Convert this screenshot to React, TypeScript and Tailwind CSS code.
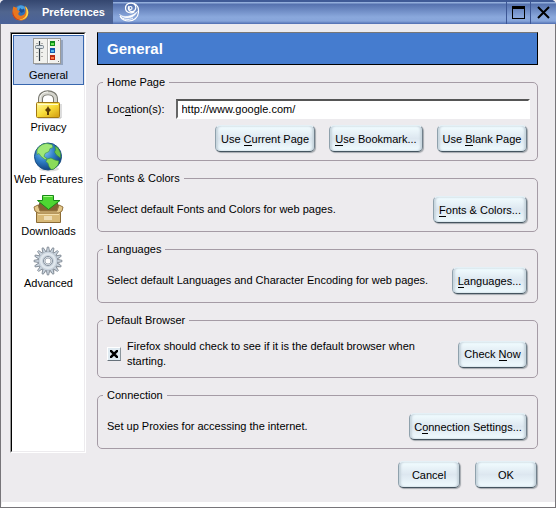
import React from "react";

function FirefoxIcon() {
  return (
    <svg width="17" height="17" viewBox="0 0 17 17" aria-hidden="true">
      <circle cx="8.5" cy="8" r="7" fill="#2f6fb8" />
      <path d="M5 3c3-2.500 7-2 8.500 1l-2 3-3-1-3 1z" fill="#4aa0e0" />
      <path d="M8 4l2 1.500 2-1v3L9.500 9 7 7z" fill="#1d4f94" />
      <path d="M1.500 2.500C3 3.500 4.500 3.500 5.500 3.500L5 6l3 1-1.500 2c-1 2 1.500 3.500 3.500 2.500 2-.5 3.500-2 3.500-5 0-2-.5-3.500-1.500-4.500 3 1.500 4.500 4 4.300 7C16 14 12.500 16.500 8.500 16.500 4 16.500.5 13 .5 8.500c0-2.500.2-4.500 1-6z" fill="#e8761e" />
      <path d="M13 2c4 3 4.500 9 .5 12-2 1.500-4 2-6 1.500 4 0 7-3 7-7 0-2.500-.5-4.500-1.500-6.500z" fill="#f9dc50" />
      <path d="M1 7c0 5 3 8 7 9-4 .5-7.500-3-7.500-7z" fill="#c23a1c" />
    </svg>
  );
}

function SwirlIcon() {
  return (
    <svg width="22" height="20" viewBox="0 0 22 20" fill="none" stroke="#fff" aria-hidden="true">
      <circle cx="11.500" cy="6" r="1.500" strokeWidth="1.200" />
      <path d="M15.500 9.500C12 12.500 6.500 10.500 6.500 6S12 0 15 2s2 7-1.500 7.500S8.500 6.500 10 4" strokeWidth="1.200" />
      <path d="M15 1.500c3.500 1.500 5 5 4.500 9C19 16 14.500 19 10 19c-4 0-7.500-2-9-5" strokeWidth="1.200" />
      <path d="M.5 12.500c4 3.500 12 2.500 18-3-3.500 6.500-12 9-18 3z" fill="#fff" strokeWidth=".6" />
      <path d="M1 14.500c3 3 9 4 13 1.500" strokeWidth="1" />
    </svg>
  );
}

function GeneralIcon() {
  return (
    <svg width="32" height="30" viewBox="0 0 32 30" aria-hidden="true">
      <rect x="2" y="2" width="28" height="25" fill="#6f7f9a" opacity=".55" />
      <rect x=".5" y=".5" width="27" height="25" fill="#f1f1ed" stroke="#9a9a98" />
      <path d="M14.500 1v24" stroke="#b5b5b2" />
      <path d="M15.500 1v24" stroke="#fff" />
      <path d="M6.500 3v20" stroke="#26333f" strokeWidth="1.200" />
      <path d="M3 5.500h2M3 14.500h2M3 18.500h2M8 5.500h2M8 14.500h2M8 18.500h2" stroke="#b0b0ad" />
      <rect x="2.500" y="7.500" width="8" height="3" rx="1" fill="#dce3e8" stroke="#738089" />
      <rect x="17" y="3" width="5" height="5" fill="#0c8a1b" />
      <rect x="17" y="10" width="5" height="5" fill="#1258ac" />
      <rect x="17" y="17" width="5" height="5" fill="#b82a10" />
      <path d="M18 5h3v2h-3z" fill="#66e554" />
      <path d="M18 12h3v2h-3z" fill="#55b9f2" />
      <path d="M18 19h3v2h-3z" fill="#ff7a44" />
      <path d="M25 2h1v1h-1zM25 23h1v1h-1z" fill="#777" />
    </svg>
  );
}

function LockIcon() {
  return (
    <svg width="32" height="30" viewBox="0 0 32 30" aria-hidden="true">
      <defs>
        <linearGradient id="gold" x1="0" y1="0" x2="1" y2="1">
          <stop stopColor="#fff7a0" /><stop offset=".5" stopColor="#f8dc38" /><stop offset="1" stopColor="#d09a10" />
        </linearGradient>
      </defs>
      <path d="M7.500 14V9C7.500.500 22.500.500 22.500 9v5" fill="none" stroke="#77776f" strokeWidth="5" />
      <path d="M7.500 14V9C7.500 1 22.500 1 22.500 9v5" fill="none" stroke="#d4d4cc" strokeWidth="3" />
      <path d="M7 13V9C7 4 11 2 15 2" fill="none" stroke="#f8f8f4" />
      <path d="M5 28h23V14" fill="none" stroke="#bbb" />
      <rect x="3.500" y="12.500" width="23" height="15" rx="1" fill="url(#gold)" stroke="#a27812" />
      <path d="M5 14.500h20" stroke="#fffcc5" />
      <path d="M15 16l1 2 2 2-2 2v3h-2v-3l-2-2 2-2z" fill="#5b3c06" />
    </svg>
  );
}

function GlobeIcon() {
  return (
    <svg width="32" height="30" viewBox="0 0 32 30" aria-hidden="true">
      <defs>
        <radialGradient id="sea" cx=".35" cy=".3" r=".75">
          <stop stopColor="#8fccf4" /><stop offset=".5" stopColor="#2f7fc8" /><stop offset="1" stopColor="#103c78" />
        </radialGradient>
      </defs>
      <ellipse cx="16" cy="27" rx="10" ry="2.500" fill="#bbb" opacity=".5" />
      <circle cx="15" cy="14.500" r="13.500" fill="url(#sea)" stroke="#164c84" />
      <path d="M4 8c2-4 6-6.500 10-6.500l5 1 1 3-3 1-1 3-4 2-1 3 3 2-2 1-4-3-2-3-2 1z" fill="#a0e878" stroke="#3c963c" strokeWidth=".6" />
      <path d="M14 17l4-1 4 2 4 1-1 4-4 4-3 .5-2-3-1-3-2-2z" fill="#8adb5a" stroke="#31883a" strokeWidth=".6" />
      <path d="M22 4l3 2 2.500 5v5l-4-3-2-3 1-2z" fill="#6bc34b" stroke="#31883a" strokeWidth=".6" />
    </svg>
  );
}

function DownloadIcon() {
  return (
    <svg width="32" height="30" viewBox="0 0 32 30" aria-hidden="true">
      <path d="M4 14L7 9h17l3 5v4H4z" fill="#826233" stroke="#654a24" />
      <path d="M3.500 16.500h24v12h-24z" fill="#d8b977" stroke="#8b6b34" />
      <path d="M1 13l4-2 2 6h17l2-6 4 2-1 4-3 2H5l-3-2z" fill="#e3c789" stroke="#947440" />
      <path d="M5 20.500h21" stroke="#f3dfad" />
      <rect x="11" y="22" width="8" height="4" fill="#eddcb4" />
      <path d="M9.500 1.500h11v5H27L15.500 15.500 4.500 6.500h5z" fill="#4ed632" stroke="#188a18" />
      <path d="M10.500 2.500h9" stroke="#adff8c" />
    </svg>
  );
}

function GearIcon() {
  const teeth = Array.from({ length: 16 }, (_, i) => i * 22.5);
  return (
    <svg width="32" height="30" viewBox="0 0 32 30" aria-hidden="true">
      <circle cx="16" cy="16" r="11" fill="#d9dadd" />
      {teeth.map((angle) => (
        <path key={angle} d="M13.300 6l1-5h1.400l1 5z" fill="#c9d3dd" stroke="#78828d" strokeWidth=".8" transform={`rotate(${angle} 15 15)`} />
      ))}
      <circle cx="15" cy="15" r="9.500" fill="#c9d3dd" />
      <circle cx="15" cy="15" r="7" fill="none" stroke="#e1e8ee" strokeWidth="2" />
      <circle cx="15" cy="15" r="4.500" fill="#e4e9ee" stroke="#87929e" />
      <circle cx="15" cy="15" r="3" fill="#fff" stroke="#a7afb8" />
    </svg>
  );
}

const sections = [
  { name: "General", Icon: GeneralIcon },
  { name: "Privacy", Icon: LockIcon },
  { name: "Web Features", Icon: GlobeIcon },
  { name: "Downloads", Icon: DownloadIcon },
  { name: "Advanced", Icon: GearIcon },
];

function Key({ children }: { children: React.ReactNode }) {
  return <span className="border-b border-black">{children}</span>;
}

function PushButton({ children, className = "" }: { children: React.ReactNode; className?: string }) {
  return (
    <button
      type="button"
      className={`h-[27px] shrink-0 rounded-[5px] border border-t-[#e4f0f6] border-r-[#71808b] border-b-[#44545f] border-l-[#8fa1ac] bg-linear-to-b from-[#f2fdff] via-[#dde7f0] to-[#f0fcff] text-center leading-3 whitespace-nowrap shadow-[inset_2px_0_2px_#c8d5de,inset_-2px_0_2px_#c8d5de,1px_1px_1px_#a5a9ae] ${className}`}
    >
      {children}
    </button>
  );
}

function Group({ title, children }: { title: string; children: React.ReactNode }) {
  return (
    <fieldset className="min-w-0 rounded-[5px] border border-[#a59ba5] pr-[10px] pb-2 pl-[9px]">
      <legend className="-ml-1 px-1 leading-[14px]">{title}</legend>
      {children}
    </fieldset>
  );
}

function SettingRow({ text, children }: { text: string; children: React.ReactNode }) {
  return (
    <div className="flex items-center justify-between pt-[11px]">
      <p className="whitespace-nowrap">{text}</p>
      {children}
    </div>
  );
}

export default function App() {
  return (
    <div className="flex min-h-screen flex-col bg-[#edebee] font-['Liberation_Sans',Arial,sans-serif] text-[11px] leading-[15px] text-black">
      <header className="flex h-6 overflow-hidden rounded-t-[5px] bg-[#4b639d]">
        <div className="flex w-[113px] items-center gap-[13px] bg-linear-to-b from-[#34466f] via-[#50658f] to-[#4a6299] pl-3">
          <FirefoxIcon />
          <h1 className="font-bold text-white">Preferences</h1>
        </div>
        <div className="flex flex-1 items-center bg-[linear-gradient(#3f5a96_0,#3f5a96_2px,#93aedb_2px,#93aedb_3px,#5571ae_4px,#8aa8dc_17px,#87a5da_21px,#4f6db0_24px)] pl-1.5">
          <SwirlIcon />
        </div>
        <button type="button" aria-label="Maximize" className="flex w-6 items-center justify-center border-l border-[#3d5795] bg-[linear-gradient(#3f5a96_0,#3f5a96_2px,#93aedb_2px,#93aedb_3px,#5571ae_4px,#8aa8dc_17px,#87a5da_21px,#4f6db0_24px)]">
          <span className="size-[13px] border border-t-[3px] border-black" />
        </button>
        <button type="button" aria-label="Close" className="flex w-[26px] items-center justify-center border-l border-[#3d5795] bg-[linear-gradient(#3f5a96_0,#3f5a96_2px,#93aedb_2px,#93aedb_3px,#5571ae_4px,#8aa8dc_17px,#87a5da_21px,#4f6db0_24px)]">
          <svg width="13" height="13" viewBox="0 0 13 13" stroke="#000" strokeWidth="2" aria-hidden="true"><path d="M1 1l11 11M12 1L1 12" /></svg>
        </button>
      </header>

      <div className="flex flex-1 flex-col border-x border-b border-[#777579]">
        <div className="flex flex-1 flex-col border-b-[5px] border-l border-white border-l-[#edebee] pt-2 pr-[17px] pl-2">
          <div className="flex gap-[11px]">
            <nav className="w-[76px] shrink-0 border border-t-[#777] border-r-white border-b-white border-l-[#999] bg-white">
              <div className="h-full border border-t-black border-r-[#edebee] border-b-[#edebee] border-l-black p-px pr-0">
                {sections.map(({ name, Icon }, i) => (
                  <button
                    key={name}
                    type="button"
                    className={`flex h-[50px] w-full flex-col items-center border pt-0.5 whitespace-nowrap ${i === 0 ? "border-[#3867ae] bg-[#c2d2ee]" : "mt-0.5 border-transparent"}`}
                  >
                    <Icon />
                    {name}
                  </button>
                ))}
              </div>
            </nav>

            <main className="flex min-w-0 flex-1 flex-col pb-1">
              <h2 className="mb-[10px] flex h-[33px] items-center border border-black border-t-[#777] bg-[#457ccf] pl-[9px] text-[15px] font-bold text-white">General</h2>
              <form className="flex flex-col gap-[10px]">
                <Group title="Home Page">
                  <div className="-mr-[3px] flex items-center gap-[11px] pt-[10px]">
                    <label htmlFor="location">Loc<Key>a</Key>tion(s):</label>
                    <input
                      id="location"
                      type="text"
                      defaultValue="http://www.google.com/"
                      className="h-5 min-w-0 flex-1 border-2 border-t-[#555] border-r-white border-b-white border-l-[#666] bg-white px-1 outline-none"
                    />
                  </div>
                  <div className="flex justify-end gap-[14px] pt-1.5">
                    <PushButton className="w-[100px]">Use <Key>C</Key>urrent Page</PushButton>
                    <PushButton className="w-[94px]"><Key>U</Key>se Bookmark...</PushButton>
                    <PushButton className="w-[90px]">Use <Key>B</Key>lank Page</PushButton>
                  </div>
                </Group>
                <Group title="Fonts &amp; Colors">
                  <SettingRow text="Select default Fonts and Colors for web pages.">
                    <PushButton className="w-[94px]"><Key>F</Key>onts &amp; Colors...</PushButton>
                  </SettingRow>
                </Group>
                <Group title="Languages">
                  <SettingRow text="Select default Languages and Character Encoding for web pages.">
                    <PushButton className="w-[75px]"><Key>L</Key>anguages...</PushButton>
                  </SettingRow>
                </Group>
                <Group title="Default Browser">
                  <div className="flex items-center justify-between pt-3">
                    <label className="flex w-[320px] items-center gap-1.5">
                      <span className="grid shrink-0 place-items-center">
                        <input
                          type="checkbox"
                          defaultChecked
                          className="peer col-start-1 row-start-1 size-[14px] appearance-none border border-t-white border-r-[#8a949b] border-b-[#66717a] border-l-white bg-[#dfeaf1]"
                        />
                        <svg className="pointer-events-none invisible col-start-1 row-start-1 peer-checked:visible" width="8" height="8" viewBox="0 0 8 8" stroke="#000" strokeWidth="2.500" aria-hidden="true"><path d="M0 0l8 8M8 0L0 8" /></svg>
                      </span>
                      <span>Firefox should check to see if it is the default browser when starting.</span>
                    </label>
                    <PushButton className="w-[69px]">Check <Key>N</Key>ow</PushButton>
                  </div>
                </Group>
                <Group title="Connection">
                  <SettingRow text="Set up Proxies for accessing the internet.">
                    <PushButton className="w-[118px]">C<Key>o</Key>nnection Settings...</PushButton>
                  </SettingRow>
                </Group>
              </form>
            </main>
          </div>
          <div className="flex justify-end gap-[15px] pt-2 pr-px">
            <PushButton className="w-[62px]">Cancel</PushButton>
            <PushButton className="w-[62px]">OK</PushButton>
          </div>
        </div>
      </div>
    </div>
  );
}
